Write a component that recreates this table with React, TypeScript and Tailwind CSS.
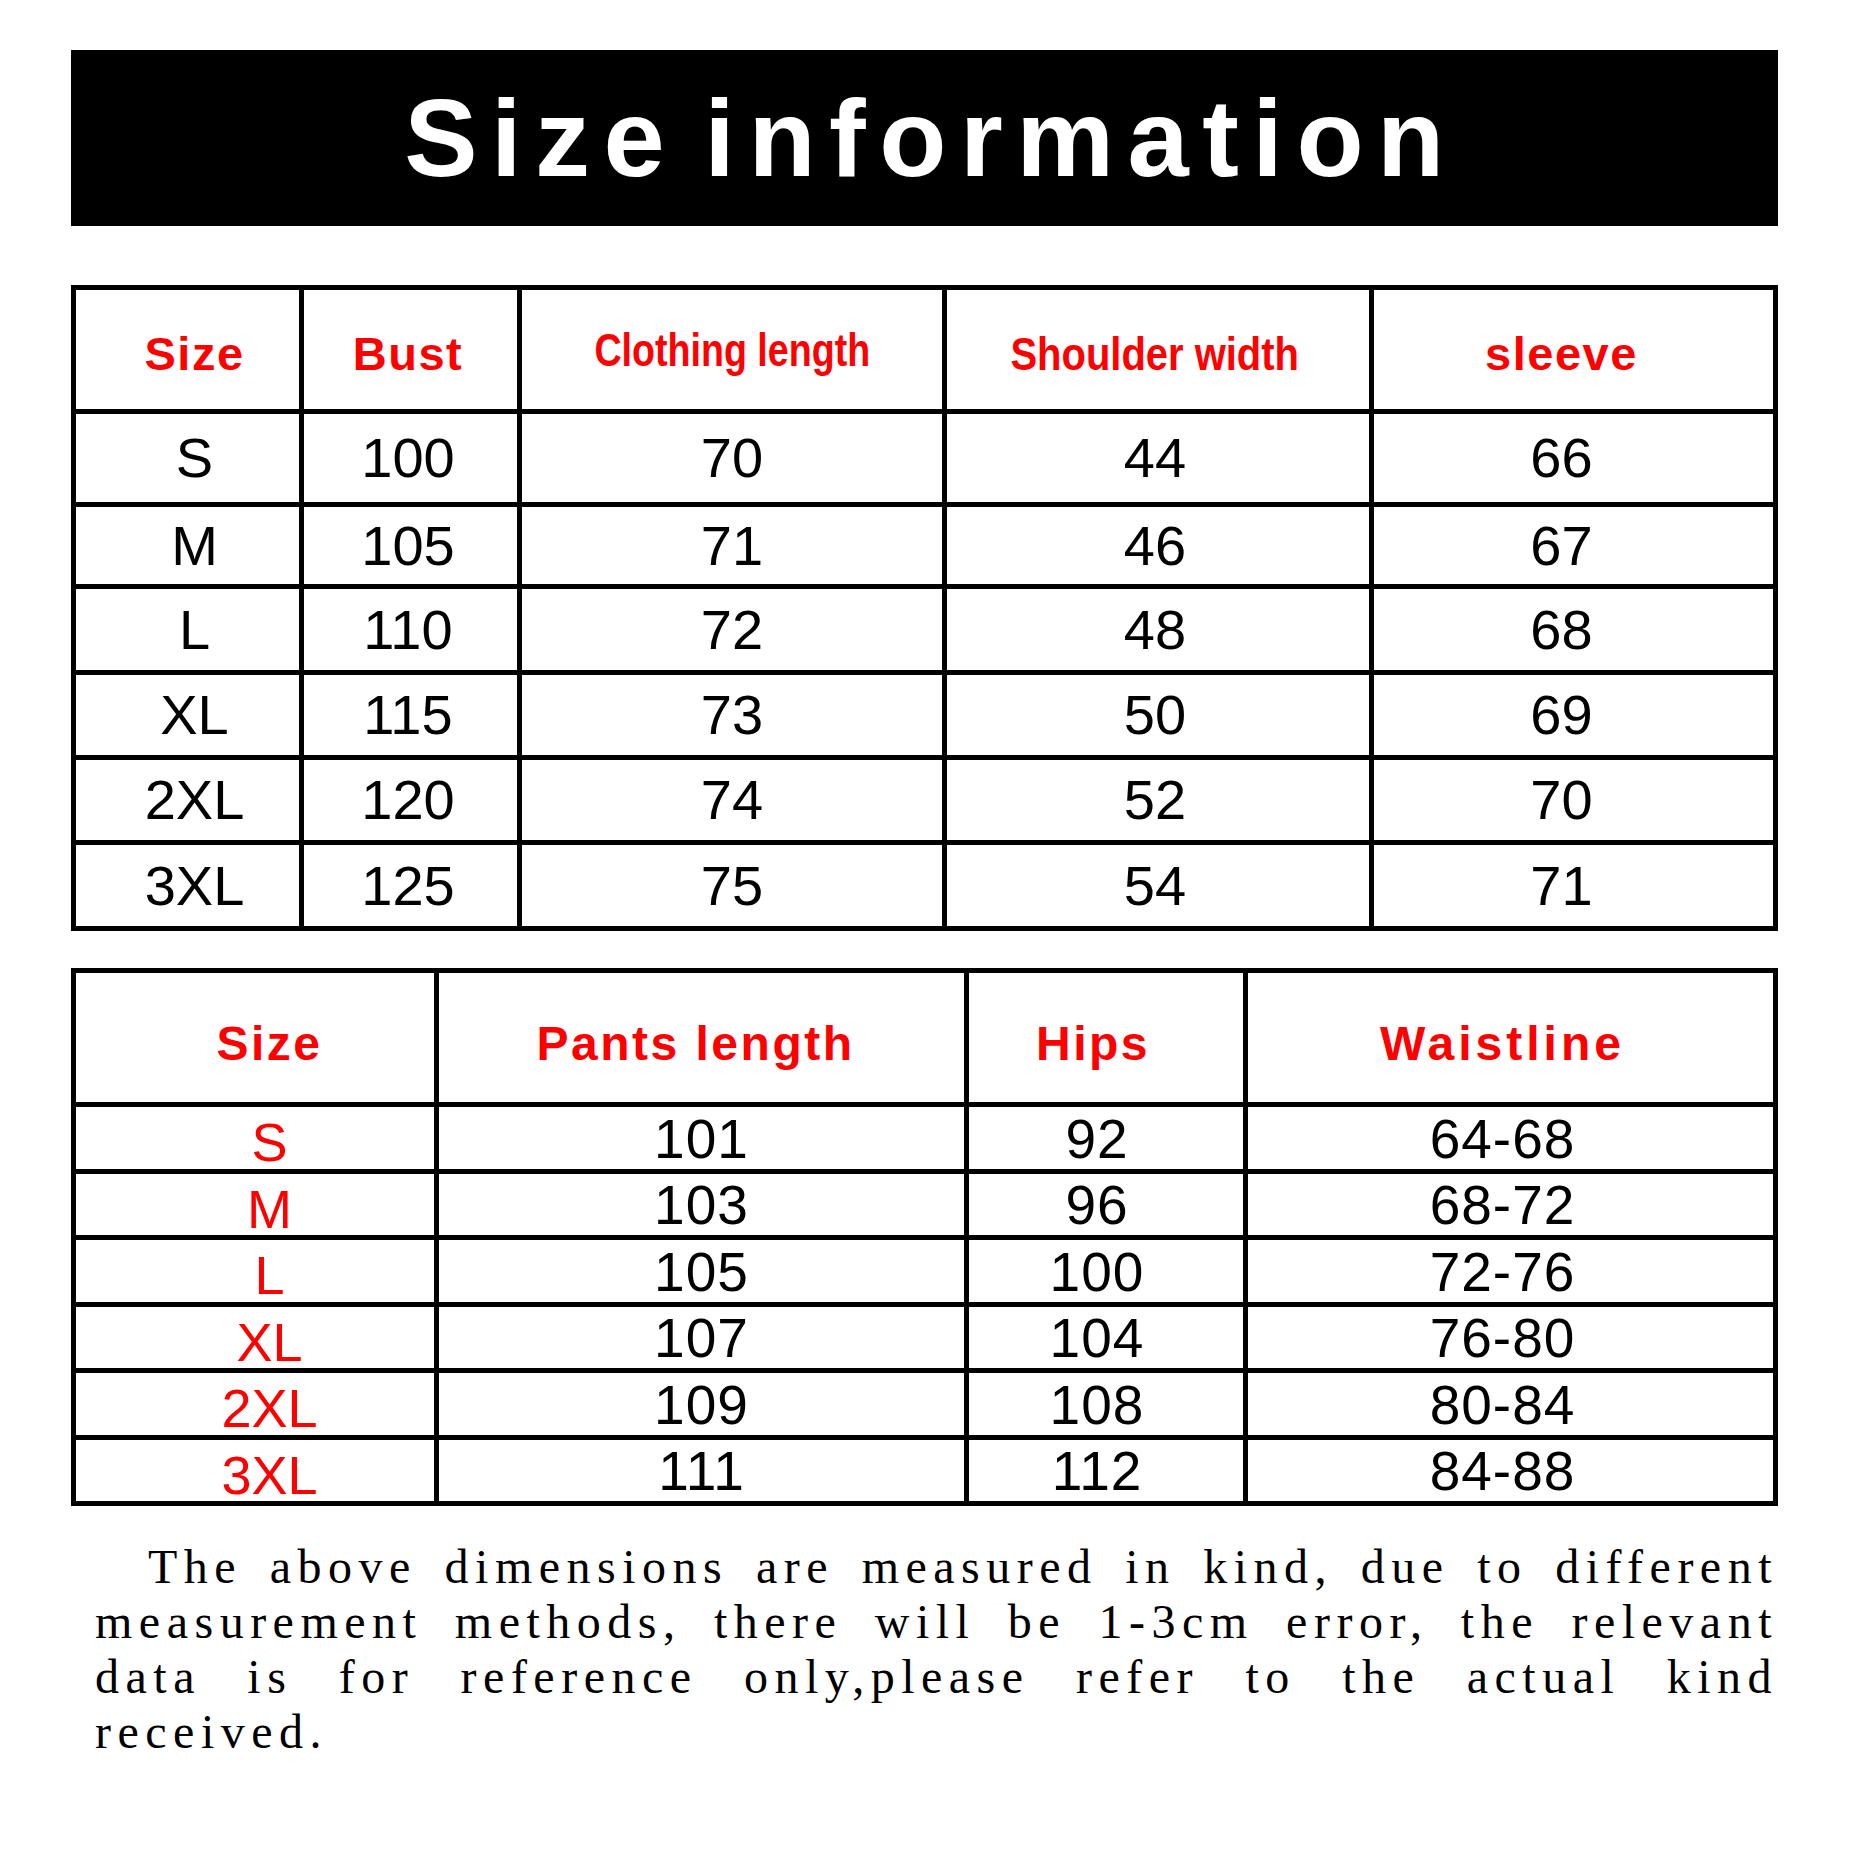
import React from "react";

const sans = "font-['Liberation_Sans',Arial,sans-serif]";

const topRows = [
  ["S", "100", "70", "44", "66"],
  ["M", "105", "71", "46", "67"],
  ["L", "110", "72", "48", "68"],
  ["XL", "115", "73", "50", "69"],
  ["2XL", "120", "74", "52", "70"],
  ["3XL", "125", "75", "54", "71"],
];

const pantsRows = [
  ["S", "101", "92", "64-68"],
  ["M", "103", "96", "68-72"],
  ["L", "105", "100", "72-76"],
  ["XL", "107", "104", "76-80"],
  ["2XL", "109", "108", "80-84"],
  ["3XL", "111", "112", "84-88"],
];

// per-column nudges so text sits where the original has it
const topPad = ["pl-[14px]", "pr-[5px]", "", "pr-[6px]", "pr-[24px]"];
const pantsPad = ["pl-[29px]", "", "pr-[18px]", "pr-[16px]"];
const pantsHeadPad = ["pl-[29px]", "pr-[12px]", "pr-[26px]", "pr-[16px]"];
const pantsHeadTrack = ["tracking-[2.5px]", "tracking-[2.5px]", "tracking-[2.5px]", "tracking-[4px]"];

const note = [
  "The above dimensions are measured in kind, due to different",
  "measurement methods, there will be 1-3cm error, the relevant",
  "data is for reference only,please refer to the actual kind",
];

export default function App() {
  return (
    <div className={`w-[1849px] h-[1849px] bg-white pl-[71px] pt-[50px] ${sans}`}>
      <div className="w-[1707px]">
        <div className="h-[176px] bg-black flex items-center justify-center pl-[13px]">
          <h1 className="text-white font-bold text-[110px] leading-none tracking-[13.5px] [word-spacing:-18px]">
            Size information
          </h1>
        </div>

        {/* tops */}
        <div className="mt-[59px] grid grid-cols-[223px_213px_420px_422px_399px] grid-rows-[119px_88px_77px_81px_80px_80px_81px] gap-[5px] bg-black p-[5px]">
          <div className={`bg-white flex items-center justify-center pt-[8px] ${topPad[0]}`}>
            <span className="text-[#ff0000] font-bold text-[47px] leading-none tracking-[1.5px]">Size</span>
          </div>
          <div className={`bg-white flex items-center justify-center pt-[8px] ${topPad[1]}`}>
            <span className="text-[#ff0000] font-bold text-[47px] leading-none tracking-[1.5px]">Bust</span>
          </div>
          <div className="bg-white flex items-center justify-center pt-[8px]">
            <span className="inline-block whitespace-nowrap text-[#ff0000] font-bold text-[47px] leading-none scale-x-[0.8] -translate-y-[4px]">
              Clothing length
            </span>
          </div>
          <div className={`bg-white flex items-center justify-center pt-[8px] ${topPad[3]}`}>
            <span className="inline-block whitespace-nowrap text-[#ff0000] font-bold text-[47px] leading-none scale-x-[0.85]">
              Shoulder width
            </span>
          </div>
          <div className={`bg-white flex items-center justify-center pt-[8px] ${topPad[4]}`}>
            <span className="text-[#ff0000] font-bold text-[47px] leading-none tracking-[1.5px]">sleeve</span>
          </div>

          {topRows.map((row, r) =>
            row.map((v, c) => (
              <div
                key={`t${r}-${c}`}
                className={`bg-white flex items-center justify-center text-black text-[56px] leading-none ${topPad[c]}`}
              >
                {v}
              </div>
            ))
          )}
        </div>

        {/* pants */}
        <div className="mt-[37px] grid grid-cols-[358px_525px_274px_525px] grid-rows-[129px_62px_61px_62px_61px_62px_61px] gap-[5px] bg-black p-[5px]">
          {["Size", "Pants length", "Hips", "Waistline"].map((h, c) => (
            <div key={h} className={`bg-white flex items-center justify-center pt-[12px] ${pantsHeadPad[c]}`}>
              <span
                className={`text-[#ff0000] font-bold text-[48px] leading-none whitespace-nowrap ${pantsHeadTrack[c]}`}
              >
                {h}
              </span>
            </div>
          ))}
          {pantsRows.map((row, r) =>
            row.map((v, c) => (
              <div
                key={`p${r}-${c}`}
                className={`bg-white flex items-center justify-center leading-none ${pantsPad[c]} ${
                  c === 0
                    ? "text-[#ff0000] text-[54px] pt-[8px]"
                    : "text-black text-[55px] tracking-[1px] pt-[2px]"
                }`}
              >
                {v}
              </div>
            ))
          )}
        </div>

        <div className="mt-[33px] pl-[24px] font-['Liberation_Serif',serif] text-[48px] leading-[55px] tracking-[6.5px] text-black">
          {note.map((line, i) => (
            <div
              key={i}
              className={`whitespace-nowrap text-justify [text-align-last:justify] ${i === 0 ? "pl-[53px]" : ""}`}
            >
              {line}
            </div>
          ))}
          <div className="whitespace-nowrap">received.</div>
        </div>
      </div>
    </div>
  );
}
